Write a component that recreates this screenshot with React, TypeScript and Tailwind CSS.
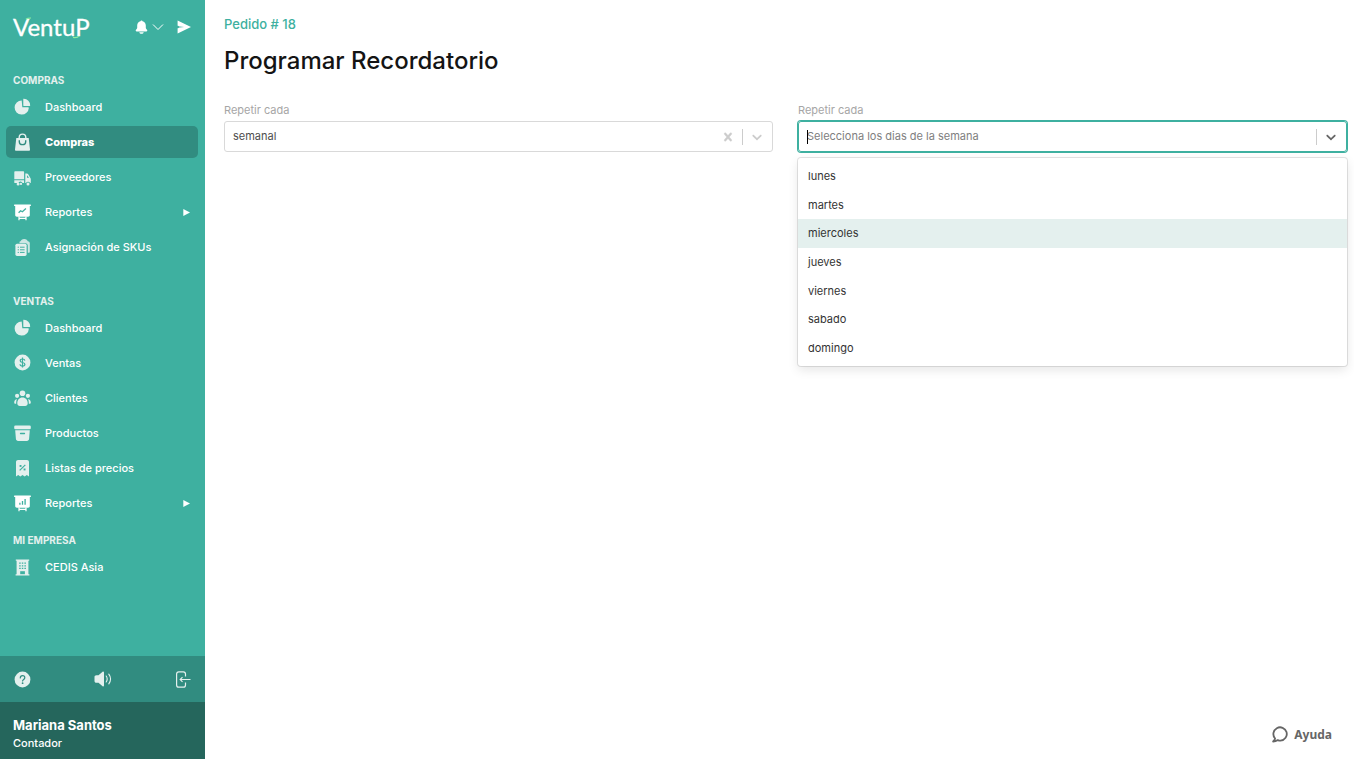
import { useState } from 'react'
import type { ReactNode } from 'react'

interface NavItem {
  label: string
  icon: ReactNode
  active?: boolean
  hasChildren?: boolean
}

interface NavSection {
  title: string
  className: string
  items: NavItem[]
}

const DAYS = [
  'lunes',
  'martes',
  'miercoles',
  'jueves',
  'viernes',
  'sabado',
  'domingo',
]

function NavIcon({ children }: { children: ReactNode }) {
  return (
    <svg
      viewBox="0 0 17 18"
      className="w-[17px] h-[18px] shrink-0 text-[#e4f0ee]"
      fill="currentColor"
      aria-hidden="true"
    >
      {children}
    </svg>
  )
}

const pieIcon = (
  <NavIcon>
    <path d="M7.7 2.4a7.1 7.1 0 1 0 7.1 7.5 .6.6 0 0 0-.6-.6H8.3z" />
    <path d="M9.3 1.1v6.3c0 .3.2.5.5.5h5.9c.3 0 .5-.2.5-.5A6.7 6.7 0 0 0 9.8.7c-.3 0-.5.1-.5.4z" />
  </NavIcon>
)

const bagIcon = (
  <NavIcon>
    <path d="M5.2 6V4.4a3.3 3.3 0 0 1 6.6 0V6" fill="none" stroke="currentColor" strokeWidth="1.4" />
    <path d="M2.3 5h12.4l1.3 11.4c.1.8-.4 1.400-1.200 1.400H2.200c-.8 0-1.300-.6-1.200-1.400z" />
    <path d="M5.300 7.200v1.200a3.200 3.200 0 0 0 6.400 0V7.200" fill="none" stroke="#318c80" strokeWidth="1.400" />
  </NavIcon>
)

const truckIcon = (
  <NavIcon>
    <path d="M1 3.300h8.400c.4 0 .7.300.7.700v7.200H.3V4c0-.4.300-.7.700-.7z" />
    <path d="M.3 12.300h9.800v2.800H8.600a2.300 2.300 0 0 0-2.200-1.500 2.300 2.300 0 0 0-2.100 1.500H1c-.4 0-.7-.3-.7-.7z" />
    <path d="M11.300 5.600h1.600c.6 0 1 .3 1.300.7l2.300 4c.2.3.3.7.3 1v3.100c0 .4-.3.7-.7.7a2.200 2.200 0 0 0-4.100 0h-.7z" />
    <path d="M13 7.200v2.600h2.100z" fill="#3eb0a0" />
    <circle cx="4.100" cy="15.900" r="1.500" />
    <circle cx="7" cy="15.900" r="1.100" />
    <circle cx="14" cy="16" r="1.500" />
  </NavIcon>
)

const trendBoardIcon = (
  <NavIcon>
    <g className="text-white" fill="currentColor">
      <rect x="0" y="1.400" width="17" height="1.500" rx="0.600" />
      <path d="M1.200 2.500h14.600v9.600c0 1-.8 1.700-1.700 1.700H2.900c-1 0-1.700-.8-1.700-1.700z" />
      <path d="M4.400 13.500h1.300v1.200h5.600v-1.200h1.300v3.800h-1.200v-1.400H5.600v1.400H4.400z" />
      <path d="M4.600 9.800l2-2 1.800 1 3.500-3.300" fill="none" stroke="#3eb0a0" strokeWidth="1.300" />
    </g>
  </NavIcon>
)

const clipboardIcon = (
  <NavIcon>
    <path d="M5.500 4.200c0-.6.400-1 1-1h7.400c1.100 0 1.900.8 1.900 1.900v8.700c0 .6-.5 1-1 1h-1V7.600c0-1.400-1-2.400-2.400-2.400H5.500z" opacity="0.850" />
    <path d="M6.600 3.700c.3-1.800 1.500-2.700 3.600-2.700s3.300.9 3.600 2.700z" opacity="0.850" />
    <rect x="1.400" y="5.700" width="11.200" height="12.200" rx="1.600" />
    <path d="M3.700 9.200h1.200M6 9.200h4.600M3.700 11.800h1.200M6 11.800h4.600M3.700 14.400h1.200M6 14.400h4.600" fill="none" stroke="#3eb0a0" strokeWidth="1" />
  </NavIcon>
)

const dollarIcon = (
  <NavIcon>
    <circle cx="8.500" cy="8.500" r="7.900" />
    <path
      d="M10.900 6.600C10.700 5.600 9.800 5 8.500 5S6.200 5.700 6.200 6.700c0 2.500 4.700 1.100 4.700 3.600 0 1.100-1 1.800-2.400 1.800s-2.400-.7-2.500-1.800M8.500 3.500v10"
      fill="none"
      stroke="#3eb0a0"
      strokeWidth="1.200"
    />
  </NavIcon>
)

const clientsIcon = (
  <NavIcon>
    <circle cx="8.500" cy="4.300" r="2.800" />
    <circle cx="3.100" cy="6.800" r="2.100" />
    <circle cx="13.900" cy="6.800" r="2.100" />
    <path d="M8.500 8.500c3.100 0 5.200 2.300 5.200 5.800 0 1.800-1.100 2.600-2.500 2.600H5.800c-1.400 0-2.500-.8-2.500-2.600 0-3.500 2.100-5.800 5.200-5.800z" />
    <path d="M2.900 9.900C1.200 10.300.2 11.600.2 13.400c0 .8.500 1.300 1.200 1.300h.8c-.1-2 .2-3.500.7-4.800zM14.100 9.900c1.700.4 2.700 1.700 2.700 3.500 0 .8-.5 1.300-1.200 1.300h-.8c.1-2-.2-3.500-.7-4.800z" />
  </NavIcon>
)

const boxIcon = (
  <NavIcon>
    <rect x="0.200" y="1.500" width="16.600" height="3.800" rx="1.300" />
    <path d="M1.200 6.300h14.600l-.7 8.500c-.1 1.300-1 2.100-2.200 2.100H4.100c-1.200 0-2.100-.8-2.200-2.100z" />
    <path d="M6.500 9.500h4" stroke="#3eb0a0" strokeWidth="1.300" strokeLinecap="round" />
  </NavIcon>
)

const receiptIcon = (
  <NavIcon>
    <path d="M4 1h9c1.100 0 2 .9 2 2v14.600l-2.200-1.500-2.100 1.500-2.200-1.500-2.200 1.500-2.100-1.500L2 17.600V3c0-1.100.9-2 2-2z" />
    <path d="M11.300 5.800l-5.600 5.600" stroke="#3eb0a0" strokeWidth="1.200" />
    <rect x="5.600" y="6" width="1.900" height="1.900" fill="#3eb0a0" />
    <rect x="9.600" y="9.500" width="1.900" height="1.900" fill="#3eb0a0" />
  </NavIcon>
)

const barBoardIcon = (
  <NavIcon>
    <g className="text-white" fill="currentColor">
      <rect x="0" y="1.400" width="17" height="1.500" rx="0.600" />
      <path d="M1.200 2.500h14.600v9.600c0 1-.8 1.700-1.700 1.700H2.900c-1 0-1.700-.8-1.700-1.700z" />
      <path d="M4.400 13.500h1.300v1.200h5.600v-1.200h1.300v3.800h-1.200v-1.400H5.600v1.400H4.400z" />
      <path d="M5.900 10.800V8.700M8.500 10.800V7M11.100 10.800V5" fill="none" stroke="#3eb0a0" strokeWidth="1.300" />
    </g>
  </NavIcon>
)

const buildingIcon = (
  <NavIcon>
    <path d="M1.800 1.500h13.400v1.300h-.8v13.400h1v1.300H1.600v-1.300h1V2.800h-.8z" />
    <path
      d="M5.200 5.200h1.500M7.800 5.200h1.500M10.400 5.200h1.500M5.200 7.800h1.500M7.800 7.800h1.500M10.400 7.800h1.500M5.200 10.400h1.500M7.800 10.400h1.500M10.400 10.400h1.500"
      stroke="#3eb0a0"
      strokeWidth="1.300"
    />
    <path d="M6.200 13.200h4.700v3H6.200z" fill="#3eb0a0" />
  </NavIcon>
)

const SECTIONS: NavSection[] = [
  {
    title: 'COMPRAS',
    className: '',
    items: [
      { label: 'Dashboard', icon: pieIcon },
      { label: 'Compras', icon: bagIcon, active: true },
      { label: 'Proveedores', icon: truckIcon },
      { label: 'Reportes', icon: trendBoardIcon, hasChildren: true },
      { label: 'Asignación de SKUs', icon: clipboardIcon },
    ],
  },
  {
    title: 'VENTAS',
    className: 'mt-[30px]',
    items: [
      { label: 'Dashboard', icon: pieIcon },
      { label: 'Ventas', icon: dollarIcon },
      { label: 'Clientes', icon: clientsIcon },
      { label: 'Productos', icon: boxIcon },
      { label: 'Listas de precios', icon: receiptIcon },
      { label: 'Reportes', icon: barBoardIcon, hasChildren: true },
    ],
  },
  {
    title: 'MI EMPRESA',
    className: 'mt-[13px]',
    items: [{ label: 'CEDIS Asia', icon: buildingIcon }],
  },
]

function Logo() {
  return (
    <svg viewBox="0 0 84 32" className="w-[84px] h-8 overflow-visible" role="img" aria-label="VentUP">
      <text
        x="0"
        y="25"
        fill="#ffffff"
        stroke="#ffffff"
        strokeWidth="0.300"
        fontSize="24"
        fontFamily="Lato, 'Open Sans', sans-serif"
      >
        VentuP
      </text>
      <path d="M13 8.200c1-.9 2.500-1.200 5-1.200" fill="none" stroke="#8df0a0" strokeWidth="1.200" />
      <path d="M60 26.500c3 .3 5 0 6-1.500" fill="none" stroke="#8df0a0" strokeWidth="1.200" />
    </svg>
  )
}

function Chevron() {
  return (
    <svg viewBox="0 0 20 20" className="w-4 h-4" fill="currentColor" aria-hidden="true">
      <path d="M4.516 7.548c0.436-0.446 1.043-0.481 1.576 0l3.908 3.747 3.908-3.747c0.533-0.481 1.141-0.446 1.574 0 0.436 0.445 0.408 1.197 0 1.615-0.406 0.418-4.695 4.502-4.695 4.502-0.217 0.223-0.502 0.335-0.787 0.335s-0.570-0.112-0.789-0.335c0 0-4.287-4.084-4.695-4.502s-0.436-1.170 0-1.615z" />
    </svg>
  )
}

function Sidebar() {
  return (
    <aside className="w-[205px] shrink-0 flex flex-col bg-[#3eb0a0] text-white">
      <div className="h-[54px] mb-[18px] pl-[13px] pr-3.5 flex items-center">
        <Logo />
        <button type="button" aria-label="Notificaciones" className="ml-auto flex items-center gap-1">
          <svg viewBox="0 0 13 14" className="w-[13px] h-3.5" fill="currentColor" aria-hidden="true">
            <path d="M6.500.4c.6 0 1 .4 1 .9 2 .4 3.300 2 3.300 4.100v2.400c0 .8.600 1.400 1.200 2 .6.700.3 1.700-.7 1.700H1.700C.7 11.500.4 10.500 1 9.800c.6-.6 1.200-1.200 1.200-2V5.400c0-2.100 1.300-3.700 3.300-4.100 0-.5.4-.9 1-.9z" />
            <path d="M4.300 12.200h4.400c-.2 1-1.100 1.600-2.200 1.600s-2-.6-2.200-1.600z" />
          </svg>
          <svg viewBox="0 0 12 8" className="w-3 h-2" fill="none" stroke="currentColor" aria-hidden="true">
            <path d="M1 1.500l5 5 5-5" />
          </svg>
        </button>
        <button type="button" aria-label="Enviar" className="ml-[13px]">
          <svg viewBox="0 0 14 14" className="w-3.5 h-3.5" fill="currentColor" aria-hidden="true">
            <path d="M.6.6L14 7 .6 13.400V8.300L7 7 .6 5.700z" />
            <path d="M1.800 5.600L8 6.500v1L1.800 8.400z" opacity="0.400" />
          </svg>
        </button>
      </div>

      <nav className="flex-1 px-1.5">
        {SECTIONS.map((section) => (
          <div key={section.title} className={section.className}>
            <h2 className="px-[7px] text-[10px] leading-4 font-bold text-[#e4f0ee]">
              {section.title}
            </h2>
            <ul className="mt-[3px] space-y-[3px]">
              {section.items.map((item) => (
                <li key={item.label}>
                  <a
                    href="#"
                    className={`h-8 pl-2 pr-2 mr-px flex items-center gap-3.5 rounded-[5px] text-[11px] ${item.active ? 'bg-[#318c80] font-extrabold' : 'font-medium'}`}
                  >
                    {item.icon}
                    <span>{item.label}</span>
                    {item.hasChildren && (
                      <svg viewBox="0 0 7 7" className="ml-auto w-[7px] h-[7px]" fill="currentColor" aria-hidden="true">
                        <path d="M.3 0L7 3.500.3 7z" />
                      </svg>
                    )}
                  </a>
                </li>
              ))}
            </ul>
          </div>
        ))}
      </nav>

      <div className="h-[46px] px-3.5 flex items-center justify-between bg-[#318c80] text-[#e4f0ee]">
        <button type="button" aria-label="Preguntas">
          <svg viewBox="0 0 17 17" className="w-[17px] h-[17px]" aria-hidden="true">
            <circle cx="8.500" cy="8.500" r="7.900" fill="currentColor" />
            <path
              d="M6.300 6.900c0-1.400 1-2.200 2.300-2.200s2.200.8 2.200 2c0 1.700-2.200 1.700-2.200 3.300"
              fill="none"
              stroke="#318c80"
              strokeWidth="1.200"
              strokeLinecap="round"
            />
            <circle cx="8.600" cy="12.200" r="0.900" fill="#318c80" />
          </svg>
        </button>
        <button type="button" aria-label="Novedades">
          <svg viewBox="0 0 18 16" className="w-[18px] h-4" aria-hidden="true">
            <path d="M2.500 4.200h2L8.600.8c.6-.5 1.400-.1 1.400.7v13c0 .8-.8 1.200-1.400.7l-4.100-3.400h-2C1.200 11.800.5 11 .5 10V6c0-1 .7-1.800 2-1.800z" fill="currentColor" />
            <path d="M12.200 5c1.200 1.800 1.200 4.200 0 6M14.800 3.200c2.200 3 2.200 6.600 0 9.600" fill="none" stroke="currentColor" strokeWidth="1.100" strokeLinecap="round" />
          </svg>
        </button>
        <button type="button" aria-label="Cerrar sesión">
          <svg viewBox="0 0 16 17" className="w-4 h-[17px]" fill="none" stroke="currentColor" strokeWidth="1.200" aria-hidden="true">
            <path d="M10.500 5.500V3.100c0-1.400-.8-2.300-2.200-2.300H3.800c-1.400 0-2.200.9-2.200 2.300v10.800c0 1.400.8 2.300 2.200 2.300h4.500c1.400 0 2.200-.9 2.200-2.300v-2.400" />
            <path d="M15.500 8.500H5.200M7.500 6.200L5.200 8.500l2.300 2.300" />
          </svg>
        </button>
      </div>

      <div className="h-[57px] pt-3.5 px-[13px] bg-[#25665c]">
        <p className="text-[13px] leading-[18px] font-bold">Mariana Santos</p>
        <p className="text-[11px] leading-[18px] font-medium">Contador</p>
      </div>
    </aside>
  )
}

export default function App() {
  const [frequency, setFrequency] = useState('semanal')
  const [query, setQuery] = useState('')
  const [highlighted, setHighlighted] = useState('miercoles')

  return (
    <div className="min-h-screen flex bg-white font-['Inter',sans-serif]">
      <Sidebar />

      <main className="relative flex-1 min-w-0 pl-[19px] pr-[7px] pt-4 overflow-hidden">
        <a href="#" className="block w-fit text-[13px] leading-4 font-medium text-[#3eb0a0]">
          Pedido # 18
        </a>
        <h1 className="mt-[13px] text-2xl leading-8 font-medium text-[#141414]">
          Programar Recordatorio
        </h1>

        <div className="mt-[25px] grid grid-cols-2 gap-[25px]">
          <div>
            <label htmlFor="frequency" className="block mb-[3px] text-[11px] leading-4 text-[#a6a6a6]">
              Repetir cada
            </label>
            <div className="h-[31px] flex items-center border border-[#d9d9d9] rounded-[3px] text-[#cccccc]">
              <select
                id="frequency"
                value={frequency}
                onChange={(e) => setFrequency(e.target.value)}
                className="flex-1 min-w-0 h-full pl-2 appearance-none bg-transparent outline-none text-[11px] text-[#4d4d4d]"
              >
                <option value=""></option>
                <option value="semanal">semanal</option>
                <option value="mensual">mensual</option>
              </select>
              <button type="button" aria-label="Limpiar" onClick={() => setFrequency('')} className="px-1.5">
                <svg viewBox="0 0 20 20" className="w-4 h-4" fill="currentColor" stroke="currentColor" strokeWidth="0.500" aria-hidden="true">
                  <path d="M14.348 14.849c-0.469 0.469-1.229 0.469-1.697 0l-2.651-3.030-2.651 3.029c-0.469 0.469-1.229 0.469-1.697 0-0.469-0.469-0.469-1.229 0-1.697l2.758-3.150-2.759-3.152c-0.469-0.469-0.469-1.228 0-1.697s1.228-0.469 1.697 0l2.652 3.031 2.651-3.031c0.469-0.469 1.228-0.469 1.697 0s0.469 1.229 0 1.697l-2.758 3.152 2.758 3.150c0.469 0.469 0.469 1.229 0 1.698z" />
                </svg>
              </button>
              <span className="w-px h-4 bg-[#cccccc]" />
              <span className="pl-1.5 pr-[7px]">
                <Chevron />
              </span>
            </div>
          </div>

          <div className="relative">
            <label htmlFor="weekdays" className="block mb-[3px] text-[11px] leading-4 text-[#a6a6a6]">
              Repetir cada
            </label>
            <div className="relative h-[31px] flex items-center border border-[#3eb0a0] ring-1 ring-[#3eb0a0] rounded-[3px]">
              <input
                id="weekdays"
                type="text"
                role="combobox"
                aria-expanded="true"
                aria-controls="weekday-list"
                placeholder="Selecciona los dias de la semana"
                value={query}
                onChange={(e) => setQuery(e.target.value)}
                className="flex-1 min-w-0 h-full pl-2 pb-0.5 outline-none caret-transparent text-[11px] text-[#333333] placeholder:text-[#808080]"
              />
              <span className="absolute left-2 w-px h-3.5 bg-black" />
              <span className="w-px h-4 bg-[#cccccc]" />
              <button type="button" aria-label="Abrir lista" className="pl-1.5 pr-[7px] text-[#666666]">
                <Chevron />
              </button>
            </div>

            <ul
              id="weekday-list"
              role="listbox"
              className="absolute top-full mt-1.5 w-full h-[208px] py-1 grid bg-white rounded-[3px] shadow-[0_0_0_1px_rgba(0,0,0,0.1),0_4px_11px_rgba(0,0,0,0.1)]"
            >
              {DAYS.map((day) => (
                <li
                  key={day}
                  role="option"
                  aria-selected={day === highlighted}
                  onMouseEnter={() => setHighlighted(day)}
                  className={`px-2.5 flex items-center text-[11px] leading-4 text-[#333333] ${day === highlighted ? 'bg-[#e4f0ee]' : ''}`}
                >
                  {day}
                </li>
              ))}
            </ul>
          </div>
        </div>

        <button
          type="button"
          className="absolute right-[22px] bottom-4 flex items-center gap-1.5 font-['Noto_Sans',sans-serif] text-[12px] leading-4 font-bold text-[#666666]"
        >
          <svg viewBox="0 0 16 17" className="w-4 h-[17px]" fill="none" stroke="currentColor" strokeWidth="1.800" strokeLinejoin="round" aria-hidden="true">
            <path d="M3.100 12.500A6.700 6.700 0 1 1 8.500 14.700c-1 0-1.900-.2-2.700-.6-1.200.8-2.800 1.400-4.700 1.400 1-.8 1.800-1.800 2-3z" />
          </svg>
          Ayuda
        </button>
      </main>
    </div>
  )
}
